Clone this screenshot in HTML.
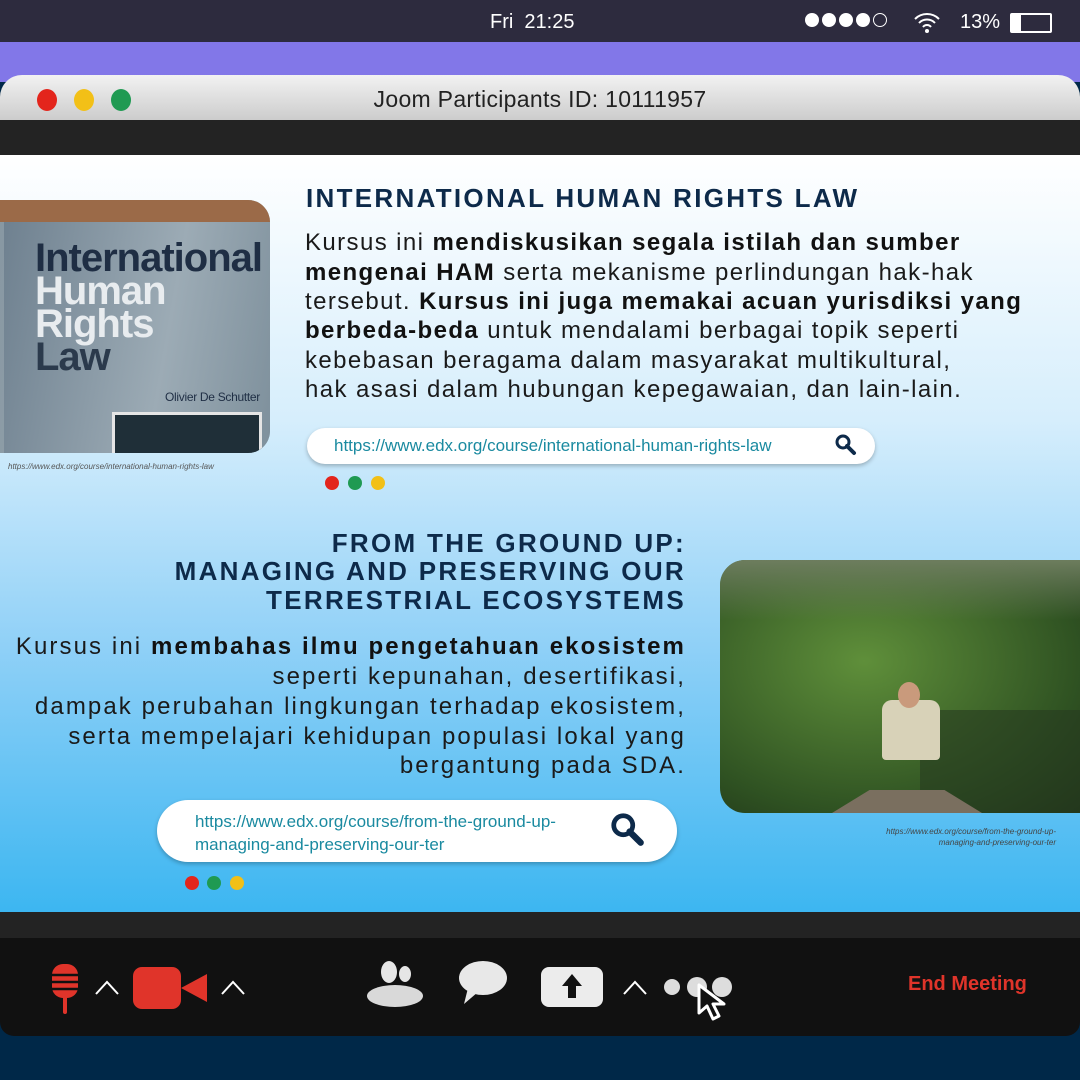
<!DOCTYPE html>
<html><head><meta charset="utf-8"><style>
*{margin:0;padding:0;box-sizing:border-box}
body{width:1080px;height:1080px;overflow:hidden;background:#002848;font-family:"Liberation Sans",sans-serif;position:relative}
.abs{position:absolute}
.t{position:absolute;white-space:nowrap;font-size:24px;color:#1a1a1a;letter-spacing:1.4px}
.t2{letter-spacing:2.1px}
.t b{color:#111}
.h{position:absolute;white-space:nowrap;font-size:26px;font-weight:bold;color:#0d2a4a;letter-spacing:2.3px}
.r{right:394px;text-align:right}
.dot{position:absolute;width:14px;height:14px;border-radius:50%}
</style></head><body>
<div class="abs" style="left:0;top:0;width:1080px;height:42px;background:#2d2b3e"></div>
<div class="abs" style="left:490px;top:11px;color:#fff;font-size:20px">Fri&nbsp; 21:25</div>
<div class="abs" style="left:805px;top:13px;display:flex;gap:3px">
<span style="width:14px;height:14px;border-radius:50%;background:#fff"></span><span style="width:14px;height:14px;border-radius:50%;background:#fff"></span><span style="width:14px;height:14px;border-radius:50%;background:#fff"></span><span style="width:14px;height:14px;border-radius:50%;background:#fff"></span><span style="width:14px;height:14px;border-radius:50%;border:1.5px solid #fff"></span></div>
<svg class="abs" style="left:912px;top:10px" width="30" height="26" viewBox="0 0 30 26"><path d="M3 9a17 17 0 0 1 24 0M7 13a11 11 0 0 1 16 0M11 17a5 5 0 0 1 8 0" stroke="#fff" stroke-width="2" fill="none"/><circle cx="15" cy="21" r="2" fill="#fff"/></svg>
<div class="abs" style="left:960px;top:11px;color:#fff;font-size:20px">13%</div>
<div class="abs" style="left:1010px;top:13px;width:42px;height:20px;border:2px solid #fff;border-radius:2px"><div style="width:9px;height:100%;background:#fff"></div></div>
<div class="abs" style="left:0;top:42px;width:1080px;height:40px;background:#8277e8"></div>
<div class="abs" style="left:0;top:75px;width:1080px;height:50px;border-radius:22px 22px 0 0;background:linear-gradient(#f2f2f2,#c8c8c8)"></div>
<div class="dot" style="left:37px;top:89px;width:20px;height:22px;background:#e3251c"></div>
<div class="dot" style="left:74px;top:89px;width:20px;height:22px;background:#f2c017"></div>
<div class="dot" style="left:111px;top:89px;width:20px;height:22px;background:#1f9a52"></div>
<div class="abs" style="left:0;top:86px;width:1080px;text-align:center;font-size:23px;color:#222;letter-spacing:0.3px">Joom Participants ID: 10111957</div>
<div class="abs" style="left:0;top:120px;width:1080px;height:36px;background:#232323"></div>
<div class="abs" style="left:0;top:155px;width:1080px;height:758px;background:linear-gradient(#ffffff 0%,#d6eefc 35%,#8fd0f7 65%,#3cb6f1 100%)"></div>

<div class="abs" style="left:0;top:200px;width:270px;height:253px;border-radius:0 22px 22px 0;overflow:hidden;background:linear-gradient(100deg,#8797a2,#9aa8b1 50%,#7f8f99)">
<div style="position:absolute;left:0;top:0;width:270px;height:22px;background:#9b6a48"></div>
<div style="position:absolute;left:4px;top:22px;width:266px;height:231px;background:linear-gradient(100deg,#6f8190,#9cabb5 60%,#7e909c)"></div>
<div style="position:absolute;left:35px;top:42px;font-weight:bold;font-size:40px;line-height:33px;color:#1f2e44;letter-spacing:-1px">International<br><span style="color:#e8ecef">Human<br>Rights</span><br><span style="color:#2b3a4c">Law</span></div>
<div style="position:absolute;left:165px;top:190px;font-size:12px;color:#1f2e44;white-space:nowrap;letter-spacing:-0.3px">Olivier De Schutter</div>
<div style="position:absolute;left:112px;top:212px;width:150px;height:41px;background:#1f2f38;border:3px solid #e5e5e5;border-bottom:none"></div>
</div>
<div class="abs" style="left:8px;top:462px;font-size:8px;font-style:italic;color:#555">https://www.edx.org/course/international-human-rights-law</div>

<div class="h" style="left:306px;top:183px">INTERNATIONAL HUMAN RIGHTS LAW</div>
<div class="t" style="left:305px;top:229px">Kursus ini <b>mendiskusikan segala istilah dan sumber</b></div>
<div class="t" style="left:305px;top:259px"><b>mengenai HAM</b> serta mekanisme perlindungan hak-hak</div>
<div class="t" style="left:305px;top:288px">tersebut. <b>Kursus ini juga memakai acuan yurisdiksi yang</b></div>
<div class="t" style="left:305px;top:317px"><b>berbeda-beda</b> untuk mendalami berbagai topik seperti</div>
<div class="t" style="left:305px;top:347px">kebebasan beragama dalam masyarakat multikultural,</div>
<div class="t" style="left:305px;top:376px">hak asasi dalam hubungan kepegawaian, dan lain-lain.</div>

<div class="abs" style="left:307px;top:428px;width:568px;height:36px;background:#fff;border-radius:18px;box-shadow:0 2px 4px rgba(0,0,0,.25)"></div>
<div class="abs" style="left:334px;top:436px;font-size:17px;color:#1a8aa0;white-space:nowrap">https://www.edx.org/course/international-human-rights-law</div>
<svg class="abs" style="left:834px;top:433px" width="24" height="24" viewBox="0 0 24 24"><circle cx="9" cy="9" r="6" stroke="#0d2a4a" stroke-width="3" fill="none"/><path d="M13 13l7 7" stroke="#0d2a4a" stroke-width="4" stroke-linecap="round"/></svg>
<div class="dot" style="left:325px;top:476px;background:#e3251c"></div>
<div class="dot" style="left:348px;top:476px;background:#1f9a52"></div>
<div class="dot" style="left:371px;top:476px;background:#f2c017"></div>

<div class="h r" style="top:528px">FROM THE GROUND UP:</div>
<div class="h r" style="top:556px">MANAGING AND PRESERVING OUR</div>
<div class="h r" style="top:585px">TERRESTRIAL ECOSYSTEMS</div>
<div class="t t2 r" style="top:633px">Kursus ini <b>membahas ilmu pengetahuan ekosistem</b></div>
<div class="t t2 r" style="top:663px">seperti kepunahan, desertifikasi,</div>
<div class="t t2 r" style="top:693px">dampak perubahan lingkungan terhadap ekosistem,</div>
<div class="t t2 r" style="top:723px">serta mempelajari kehidupan populasi lokal yang</div>
<div class="t t2 r" style="top:752px">bergantung pada SDA.</div>

<div class="abs" style="left:720px;top:560px;width:360px;height:253px;border-radius:25px 0 0 25px;overflow:hidden;background:radial-gradient(ellipse at 40% 40%,#5f8f3a,#2f5222 70%,#1f3418)">
<div style="position:absolute;left:0;top:0;width:360px;height:60px;background:linear-gradient(#6d7d5e,transparent)"></div>
<div style="position:absolute;left:200px;top:150px;width:160px;height:103px;background:#273a1f;opacity:.6"></div>
<div style="position:absolute;left:112px;top:230px;width:150px;height:23px;background:#7a6f5f;clip-path:polygon(25% 0,75% 0,100% 100%,0 100%)"></div>
<div style="position:absolute;left:162px;top:140px;width:58px;height:60px;background:#d8d2b8;border-radius:10px 10px 4px 4px"></div>
<div style="position:absolute;left:178px;top:122px;width:22px;height:26px;background:#c99a7c;border-radius:50%"></div>
</div>
<div class="abs" style="right:24px;top:826px;font-size:8px;font-style:italic;color:#444;text-align:right;line-height:11px">https://www.edx.org/course/from-the-ground-up-<br>managing-and-preserving-our-ter</div>

<div class="abs" style="left:157px;top:800px;width:520px;height:62px;background:#fff;border-radius:31px;box-shadow:0 2px 4px rgba(0,0,0,.25)"></div>
<div class="abs" style="left:195px;top:810px;font-size:17px;color:#1a8aa0;line-height:23px">https://www.edx.org/course/from-the-ground-up-<br>managing-and-preserving-our-ter</div>
<svg class="abs" style="left:609px;top:811px" width="38" height="38" viewBox="0 0 24 24"><circle cx="9" cy="9" r="6" stroke="#0d2a4a" stroke-width="3" fill="none"/><path d="M13 13l7 7" stroke="#0d2a4a" stroke-width="4" stroke-linecap="round"/></svg>
<div class="dot" style="left:185px;top:876px;background:#e3251c"></div>
<div class="dot" style="left:207px;top:876px;background:#1f9a52"></div>
<div class="dot" style="left:230px;top:876px;background:#f2c017"></div>

<div class="abs" style="left:0;top:912px;width:1080px;height:28px;background:#232323"></div>
<div class="abs" style="left:0;top:938px;width:1080px;height:98px;background:#111;border-radius:0 0 14px 14px"></div>
<svg class="abs" style="left:50px;top:962px" width="30" height="54" viewBox="0 0 30 54"><rect x="2" y="2" width="26" height="34" rx="11" fill="#e0342a"/><path d="M2 13h26M2 20h26M2 27h26" stroke="#111" stroke-width="2.5"/><rect x="13" y="34" width="4" height="18" rx="2" fill="#e0342a"/></svg>
<svg class="abs" style="left:94px;top:978px" width="26" height="18"><path d="M2 16L13 4l11 12" stroke="#fff" stroke-width="2" fill="none"/></svg>
<svg class="abs" style="left:132px;top:966px" width="80" height="44" viewBox="0 0 80 44"><rect x="1" y="1" width="48" height="42" rx="9" fill="#e0342a"/><path d="M49 22l26-14v28z" fill="#e0342a"/></svg>
<svg class="abs" style="left:220px;top:978px" width="26" height="18"><path d="M2 16L13 4l11 12" stroke="#fff" stroke-width="2" fill="none"/></svg>
<svg class="abs" style="left:365px;top:958px" width="62" height="50" viewBox="0 0 62 50"><ellipse cx="24" cy="14" rx="8" ry="11" fill="#e6e6e6"/><ellipse cx="40" cy="16" rx="6" ry="8" fill="#e6e6e6"/><ellipse cx="30" cy="38" rx="28" ry="11" fill="#d9d9d9"/></svg>
<svg class="abs" style="left:456px;top:960px" width="52" height="46" viewBox="0 0 52 46"><ellipse cx="27" cy="18" rx="24" ry="17" fill="#e8e8e8"/><path d="M12 28l-4 16 14-12z" fill="#e8e8e8"/></svg>
<svg class="abs" style="left:540px;top:966px" width="64" height="42" viewBox="0 0 64 42"><rect x="1" y="1" width="62" height="40" rx="8" fill="#ececec"/><path d="M32 8l-10 12h6v12h8v-12h6z" fill="#111"/></svg>
<svg class="abs" style="left:622px;top:978px" width="26" height="18"><path d="M2 16L13 4l11 12" stroke="#fff" stroke-width="2" fill="none"/></svg>
<div class="abs" style="left:664px;top:979px;width:16px;height:16px;border-radius:50%;background:#ddd"></div>
<div class="abs" style="left:687px;top:977px;width:20px;height:20px;border-radius:50%;background:#ddd"></div>
<div class="abs" style="left:712px;top:977px;width:20px;height:20px;border-radius:50%;background:#ddd"></div>
<svg class="abs" style="left:696px;top:983px" width="38" height="40" viewBox="0 0 38 40"><path d="M3 2v28l8-7 6 13 6-3-6-12h11z" fill="#111" stroke="#fff" stroke-width="3" stroke-linejoin="round"/></svg>
<div class="abs" style="left:908px;top:973px;color:#e0342a;font-size:20px;font-weight:bold">End Meeting</div>
</body></html>
